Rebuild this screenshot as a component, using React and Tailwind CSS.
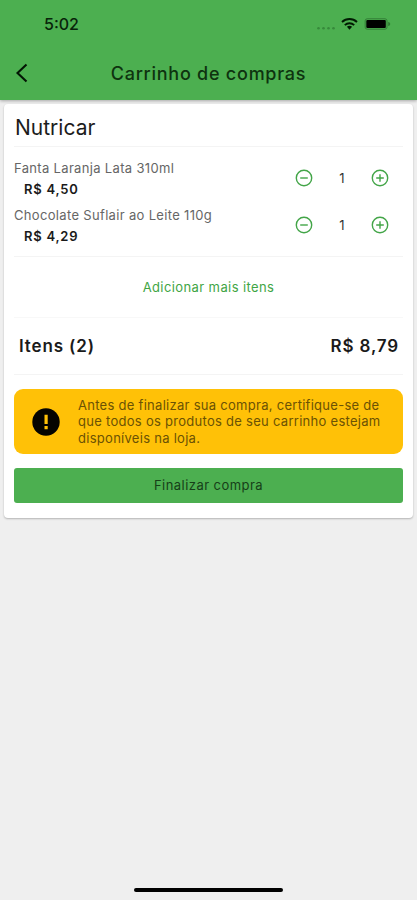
import { useState } from "react";

const INITIAL_ITEMS = [
  { id: 1, name: "Fanta Laranja Lata 310ml", price: 4.5, qty: 1 },
  { id: 2, name: "Chocolate Suflair ao Leite 110g", price: 4.29, qty: 1 },
];

const formatPrice = (value) => `R$ ${value.toFixed(2).replace(".", ",")}`;

export default function App() {
  const [items, setItems] = useState(INITIAL_ITEMS);

  const changeQty = (id, delta) => {
    setItems((prev) =>
      prev.map((i) =>
        i.id === id ? { ...i, qty: Math.max(1, i.qty + delta) } : i,
      ),
    );
  };

  const count = items.reduce((sum, i) => sum + i.qty, 0);
  const total = items.reduce((sum, i) => sum + i.qty * i.price, 0);

  return (
    <div className="flex h-[900px] w-[417px] flex-col overflow-hidden bg-[#efefef] font-['Inter',sans-serif] text-black">
      <Header />

      {/* ================= CART ================= */}
      <main className="flex-1 px-1 pt-1">
        <section className="h-[414px] rounded bg-white px-[10px] shadow-[0_1px_2px_rgba(0,0,0,0.25)]">
          <h2 className="flex h-[43px] items-center border-b border-[#f4f4f4] pt-[5px] pl-px text-[21px] text-[#1c1c1c]">
            Nutricar
          </h2>

          <ul className="h-[110px] border-b border-[#f4f4f4] pt-[10px]">
            {items.map((item) => (
              <CartItem key={item.id} item={item} onChange={changeQty} />
            ))}
          </ul>

          <button className="flex h-[61px] w-full items-center justify-center border-b border-[#f8f8f8] pt-0.5 text-[13px] tracking-[0.4px] text-[#3fa545]">
            Adicionar mais itens
          </button>

          <div className="flex h-[57px] items-center justify-between border-b border-[#f4f4f4] pt-0.5 pr-1 pl-[5px] text-[17px] font-semibold tracking-[0.85px] text-[#1a1a1a]">
            <span>Itens ({count})</span>
            <span>{formatPrice(total)}</span>
          </div>

          <Warning />

          <button className="mt-[14px] flex h-[35px] w-full items-center justify-center rounded-[3px] bg-[#4caf50] text-[13px] tracking-[0.45px] text-[#164018]">
            Finalizar compra
          </button>
        </section>
      </main>

      <div className="flex h-3 items-start justify-center">
        <span className="h-1 w-[149px] rounded-full bg-black" />
      </div>
    </div>
  );
}

/* ================= HEADER ================= */

function Header() {
  return (
    <header className="z-10 h-[100px] shrink-0 bg-[#4caf50] shadow-[0_1px_3px_rgba(0,0,0,0.3)]">
      <div className="flex h-12 items-center justify-between pr-[26px] pl-[44px]">
        <span className="text-[16px] font-medium text-[#08240a]">5:02</span>
        <StatusIcons />
      </div>
      <div className="grid h-[50px] grid-cols-[48px_1fr_48px] items-center">
        <button aria-label="Voltar" className="pl-[15px]">
          <svg width="14" height="20" viewBox="0 0 14 20" fill="none" stroke="#031504" strokeWidth="2.1">
            <path d="M11.5 1.5 2.5 10l9 8.5" />
          </svg>
        </button>
        <h1 className="text-center text-[18px] font-medium tracking-[0.75px] whitespace-nowrap text-[#0e330f]">
          Carrinho de compras
        </h1>
      </div>
    </header>
  );
}

function StatusIcons() {
  return (
    <svg width="76" height="16" viewBox="0 0 76 16">
      <g fill="#378a3b">
        <circle cx="3.5" cy="12.3" r="1.3" />
        <circle cx="8.5" cy="12.3" r="1.3" />
        <circle cx="13.5" cy="12.3" r="1.3" />
        <circle cx="18.5" cy="12.3" r="1.3" />
      </g>
      <g fill="none" stroke="#001a02" strokeWidth="1.9">
        <path d="M27 6a11 11 0 0 1 15 0" />
        <path d="M29.8 9.1a6.8 6.8 0 0 1 9.4 0" />
      </g>
      <path d="M31.9 10.8a3.9 3.9 0 0 1 5.2 0L34.5 13.8z" fill="#001a02" />
      <rect x="50.2" y="2.8" width="21.8" height="10.4" rx="2" fill="none" stroke="#327c35" />
      <rect x="51.3" y="4.1" width="19.5" height="7.8" rx="1" fill="#000" />
      <path d="M73.2 6v4c1.4-.4 2-1.1 2-2s-.6-1.6-2-2z" fill="#2f7a33" />
    </svg>
  );
}

/* ================= CART ITEM ================= */

function CartItem({ item, onChange }) {
  return (
    <li className="flex h-[46.5px] items-start justify-between pr-[14px]">
      <div>
        <p className="h-[21px] text-[13px] leading-[22px] tracking-[0.33px] text-[#666]">
          {item.name}
        </p>
        <p className="pl-[10px] text-[13px] leading-[22px] font-semibold tracking-[0.75px] text-[#1a1a1a]">
          {formatPrice(item.price)}
        </p>
      </div>
      <div className="mt-[11px] flex w-[94px] items-center justify-between">
        <QtyButton label="Remover" onClick={() => onChange(item.id, -1)} />
        <span className="text-[13px] leading-[20px] text-[#333]">{item.qty}</span>
        <QtyButton plus label="Adicionar" onClick={() => onChange(item.id, 1)} />
      </div>
    </li>
  );
}

function QtyButton({ plus, label, onClick }) {
  return (
    <button aria-label={label} onClick={onClick}>
      <svg width="18" height="18" viewBox="0 0 18 18" fill="none" stroke="#43a548" strokeWidth="1.4">
        <circle cx="9" cy="9" r="7.7" />
        <path d={plus ? "M5.2 9h7.6M9 5.2v7.6" : "M5.2 9h7.6"} />
      </svg>
    </button>
  );
}

/* ================= WARNING ================= */

function Warning() {
  return (
    <div className="mt-[14px] flex h-[65px] items-center rounded-[9px] bg-[#ffc107] pl-[18px]">
      <svg className="shrink-0" width="28" height="28" viewBox="0 0 28 28">
        <circle cx="14" cy="14" r="13.7" fill="#050400" />
        <path d="M12.5 6.8h3.2v9.2h-3.2zM12.5 18h3.2v3.2h-3.2z" fill="#ffc107" />
      </svg>
      <p className="ml-[18px] text-[13px] leading-[16.5px] tracking-[0.28px] whitespace-nowrap text-[#6b5204]">
        Antes de finalizar sua compra, certifique-se de
        <br />
        que todos os produtos de seu carrinho estejam
        <br />
        disponíveis na loja.
      </p>
    </div>
  );
}
